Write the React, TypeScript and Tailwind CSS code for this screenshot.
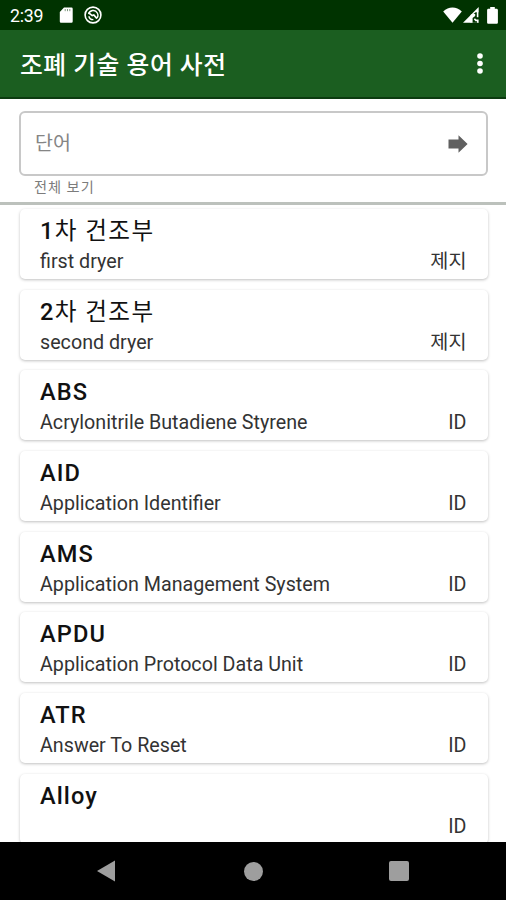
import React from 'react';

interface Term {
  order?: string;
  word: string;
  meaning: string;
  category: string;
}

const TERMS: Term[] = [
  { order: '1', word: '차 건조부', meaning: 'first dryer', category: '제지' },
  { order: '2', word: '차 건조부', meaning: 'second dryer', category: '제지' },
  { word: 'ABS', meaning: 'Acrylonitrile Butadiene Styrene', category: 'ID' },
  { word: 'AID', meaning: 'Application Identifier', category: 'ID' },
  { word: 'AMS', meaning: 'Application Management System', category: 'ID' },
  { word: 'APDU', meaning: 'Application Protocol Data Unit', category: 'ID' },
  { word: 'ATR', meaning: 'Answer To Reset', category: 'ID' },
  { word: 'Alloy', meaning: '', category: 'ID' },
];

const StatusBar = () => (
  <div className="h-[30px] shrink-0 bg-[#003300] flex items-center text-white pl-[10px] pr-[8px]">
    <span className="w-[34px] text-[17.8px] leading-[30px] tracking-[-0.3px] whitespace-nowrap pt-[2px]">2:39</span>
    {/* SD card */}
    <svg className="ml-[15px]" width="14" height="16" viewBox="0 0 14 16">
      <path d="M5 0.5h7.5a1.2 1.2 0 0 1 1.2 1.2v12.8a1.2 1.2 0 0 1-1.2 1.2H2a1.2 1.2 0 0 1-1.2-1.2V5z" fill="#fff" />
      <path d="M6.2 2v2.2M8.5 2v2.2M10.8 2v2.2" stroke="#7f987f" strokeWidth="1" />
    </svg>
    {/* Notification */}
    <svg className="ml-[11px]" width="18" height="18" viewBox="0 0 18 18" fill="none" stroke="#fff">
      <circle cx="9" cy="9" r="7.9" strokeWidth="1.6" />
      <path d="M4.7 8.2a4.6 4.6 0 0 1 8.6-1.2 4.6 4.6 0 0 1-1 5.6M4.8 10.2a4.6 4.6 0 0 0 4.6 3.4" strokeWidth="1.4" />
      <path d="M4.4 6.6l3.8 3 1.6-.6 3 3.4" strokeWidth="1.7" />
    </svg>
    <div className="ml-auto flex items-center">
      <svg width="19" height="16" viewBox="0 0 19 16">
        <path d="M0.2 4.4C5.5-0.7 13.5-0.7 18.8 4.4L9.5 15.8z" fill="#fff" />
      </svg>
      <svg className="ml-[1px]" width="16" height="16" viewBox="0 0 16 16">
        <path d="M0 15.8L15.7 0v15.8z" fill="#fff" />
        <path d="M16 5.2h-3.4L8.4 9v6.8H16z" fill="#003300" />
        <path d="M9 7h3.2v2L9.6 11v4.8H7.5V8z" fill="#fff" />
        <path d="M14.6 4.8v5.4M11.4 11.8l1.4 1.6h2v2.4" fill="none" stroke="#fff" strokeWidth="1.6" />
      </svg>
      <svg className="ml-[8px]" width="11" height="17" viewBox="0 0 11 17">
        <path d="M3.2 0h4.6v1.7h1.7c.8 0 1.4.6 1.4 1.4v12.3c0 .8-.6 1.4-1.4 1.4h-8c-.8 0-1.4-.6-1.4-1.4V3.1c0-.8.6-1.4 1.4-1.4h1.7z" fill="#fff" />
      </svg>
    </div>
  </div>
);

const AppBar = () => (
  <div className="h-[69px] shrink-0 bg-[#1b5e20] border-b-2 border-[#0c3b10] flex items-center justify-between pl-[20px] pr-[23px]">
    <h1 className="text-[24.8px] font-medium tracking-[0.5px] text-white whitespace-nowrap pt-[5px]">조폐 기술 용어 사전</h1>
    <svg width="6" height="22" viewBox="0 0 6 22" fill="#fff">
      {[3, 10.5, 18].map(y => (
        <circle key={y} cx="3" cy={y} r="2.8" />
      ))}
    </svg>
  </div>
);

const SearchField = () => (
  <div className="h-[106px] shrink-0 pl-[19px] pr-[18px] pt-[12px] border-b-[3px] border-[#bcc1bc]">
    <div className="h-[65px] border-2 border-[#c8c8c8] rounded-[6px] flex items-center justify-between pl-[14px] pr-[18px]">
      <span className="text-[19.5px] text-[#858585]">단어</span>
      <svg width="20" height="18" viewBox="0 0 20 18">
        <path d="M0.5 4.6H10.5V0.2L19.6 9 10.5 17.8v-4.4H0.5z" fill="#606060" />
      </svg>
    </div>
    <div className="pl-[15px] text-[14.2px] leading-[22px] tracking-[1px] text-[#7c7c7c]">전체 보기</div>
  </div>
);

const TermCard: React.FC<{ term: Term }> = ({ term }) => (
  <div className="h-[70px] shrink-0 bg-white rounded-[5px] shadow-[0_1px_3px_rgba(0,0,0,0.25)] pl-[20.5px] pr-[21px] pt-[7px]">
    <div className={`h-[30px] text-[23.6px] leading-[31px] text-[#111] whitespace-nowrap ${term.order ? 'tracking-[1.4px]' : 'font-medium tracking-[1.1px]'}`}>
      {term.order && <span className="font-medium">{term.order}</span>}
      {term.word}
    </div>
    <div className="h-[30px] flex justify-between text-[19.7px] leading-[32px] text-[#333] whitespace-nowrap">
      <span>{term.meaning}</span>
      <span>{term.category}</span>
    </div>
  </div>
);

const NavBar = () => (
  <div className="h-[58px] shrink-0 bg-black flex items-center justify-between pl-[97px] pr-[97px]">
    <svg width="18" height="22" viewBox="0 0 18 22">
      <path d="M0 11L18 0.5v21z" fill="#9e9e9e" />
    </svg>
    <span className="ml-[2px] w-[19px] h-[19px] rounded-full bg-[#9e9e9e]"></span>
    <span className="w-[20px] h-[20px] rounded-[2px] bg-[#9e9e9e]"></span>
  </div>
);

export default function App() {
  return (
    <div className="w-[506px] h-[900px] flex flex-col overflow-hidden bg-white font-[Roboto,'Noto_Sans_CJK_KR',sans-serif]">
      <StatusBar />
      <AppBar />
      <SearchField />
      <div className="flex-1 min-h-0 overflow-hidden flex flex-col gap-[10.7px] pl-[19.5px] pr-[18.5px] pt-[4px]">
        {TERMS.map(term => (
          <TermCard key={term.meaning || term.word} term={term} />
        ))}
      </div>
      <NavBar />
    </div>
  );
}
